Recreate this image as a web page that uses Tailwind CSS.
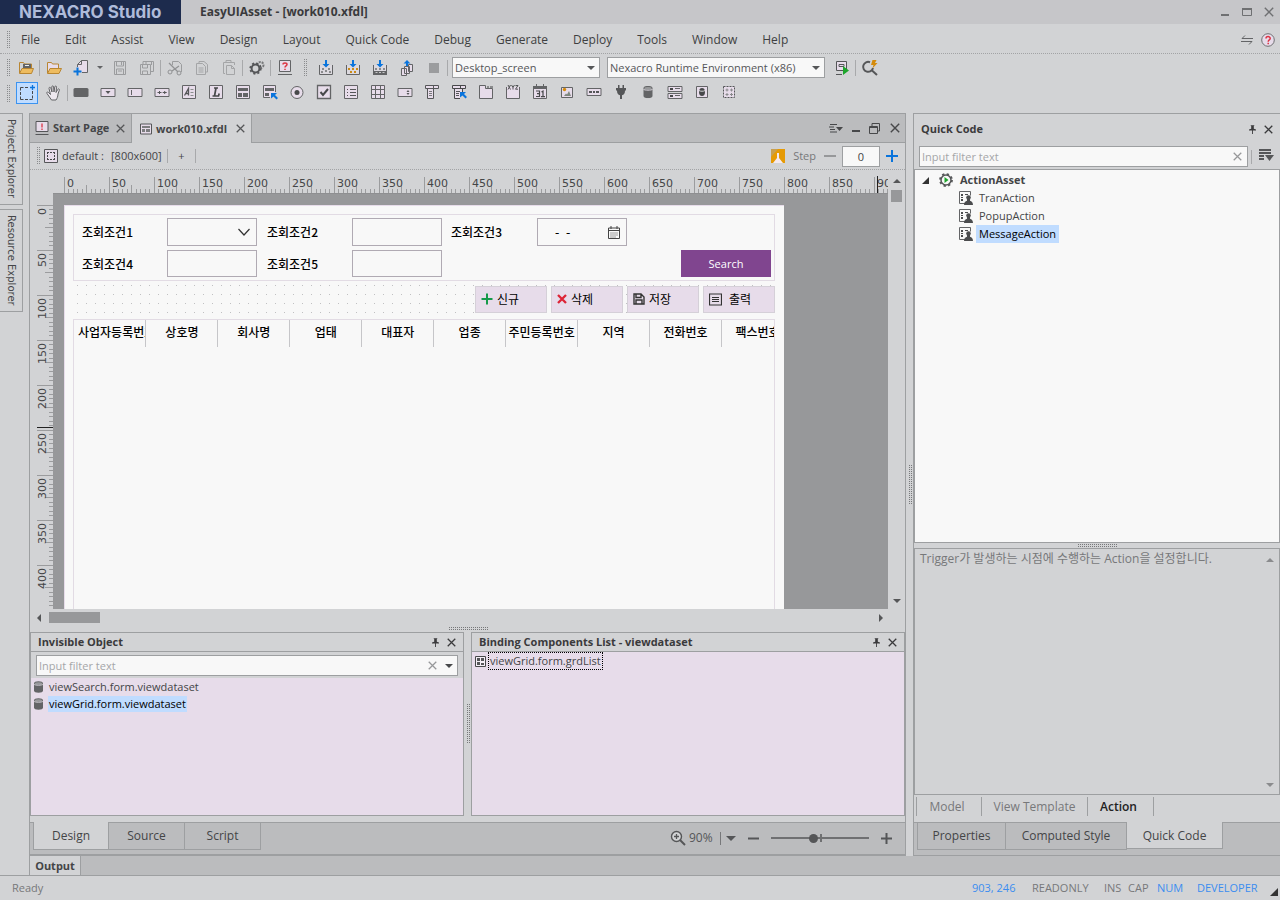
<!DOCTYPE html>
<html lang="ko">
<head>
<meta charset="utf-8">
<title>NEXACRO Studio</title>
<script src="https://cdn.jsdelivr.net/npm/@tailwindcss/browser@4"></script>
</head>
<body class="flex min-h-screen flex-col overflow-x-hidden bg-[#d2d3d5] font-['Open_Sans','Noto_Sans_CJK_KR',sans-serif] text-[11px] leading-4 text-[#444547]">

<svg class="absolute size-0" aria-hidden="true">
  <defs>
    <symbol id="x" viewBox="0 0 10 10"><path d="M.8.8l8.4 8.4M9.2.8L.8 9.2" fill="none" stroke="currentColor" stroke-width="1.4"/></symbol>
    <symbol id="pin" viewBox="0 0 8 10"><path d="M2 0h4v1H5.500v3L8 5v1H4.500v4h-1V6H0V5l2.500-1V1H2z" fill="currentColor"/></symbol>
    <symbol id="down" viewBox="0 0 8 4"><path d="M0 0h8L4 4z" fill="currentColor"/></symbol>
    <symbol id="up" viewBox="0 0 8 4"><path d="M0 4h8L4 0z" fill="currentColor"/></symbol>
    <symbol id="min" viewBox="0 0 10 10"><path d="M1 7h8v2H1z" fill="currentColor"/></symbol>
    <symbol id="db" viewBox="0 0 10 13"><path d="M0 2.500C0 1 2 0 5 0s5 1 5 2.500v8C10 12 8 13 5 13s-5-1-5-2.500z" fill="#636466"/><ellipse cx="5" cy="2.500" rx="4" ry="1.300" fill="#98999b"/><path d="M0 3.500c1 1.300 9 1.300 10 0" stroke="#e0dbe3" fill="none"/></symbol>
    <symbol id="act" viewBox="0 0 14 14"><path d="M6 12.500H.5V.5h11v4" fill="#f8f8f8" stroke="#636466"/><path d="M2 3h2v2H2zM2 6h2v1H2zM2 8h2v2H2zM6 3h3v1H6z" fill="#4b4c4e"/><circle cx="9.500" cy="6.500" r="2.300" fill="#4b4c4e"/><path d="M5 14c0-3 1.500-4 3-4.300V8h3v1.700c1.500.3 3 1.300 3 4.300z" fill="#4b4c4e"/></symbol>
    <pattern id="hticks" width="45" height="16" patternUnits="userSpaceOnUse">
      <path d="M.5 0v16M22.500 8v8M4.500 12v4M9.500 12v4M13.500 12v4M18.500 12v4M27.500 12v4M31.500 12v4M36.500 12v4M40.500 12v4" stroke="#9b9c9e"/>
    </pattern>
    <pattern id="vticks" width="16" height="45" patternUnits="userSpaceOnUse">
      <path d="M0 .5h16M8 22.500h8M12 4.500h4M12 9.500h4M12 13.500h4M12 18.500h4M12 27.500h4M12 31.500h4M12 36.500h4M12 40.500h4" stroke="#9b9c9e"/>
    </pattern>
  </defs>
</svg>

<!-- Title bar -->
<header class="flex h-6 shrink-0 items-center bg-[#c6c6c9]">
  <div class="flex h-full w-[181px] items-center bg-[#1d2b4d] pl-[19px] font-['Inter'] text-[17px] font-bold text-[#afbbda]">NEXACRO Studio</div>
  <h1 class="ml-[19px] text-[12px] font-bold text-[#3a3a3c]">EasyUIAsset - [work010.xfdl]</h1>
  <div class="ml-auto flex items-center gap-3 pr-[6px] text-[#6f7072]">
    <button aria-label="Minimize"><svg class="size-[10px]"><use href="#min"/></svg></button>
    <button aria-label="Maximize"><svg class="size-[10px]" viewBox="0 0 10 10"><path d="M.5 1.500h9v7h-9z" fill="none" stroke="currentColor"/><path d="M0 1h10v2H0z" fill="currentColor"/></svg></button>
    <button aria-label="Close"><svg class="size-[10px]"><use href="#x"/></svg></button>
  </div>
</header>

<!-- Menu bar -->
<nav class="flex h-[30px] shrink-0 items-center border-b border-dotted border-[#a2a3a5] pl-[6px] pt-[2px] text-[12px] text-[#3e3f41]">
  <span class="h-[18px] w-1 bg-[conic-gradient(#8a8b8d_25%,transparent_0)] bg-[length:2px_2px]"></span>
  <div class="ml-[11px] flex gap-[25px]">
    <button>File</button><button>Edit</button><button>Assist</button><button>View</button><button>Design</button><button>Layout</button><button>Quick Code</button><button>Debug</button><button>Generate</button><button>Deploy</button><button>Tools</button><button>Window</button><button>Help</button>
  </div>
  <div class="ml-auto flex items-center gap-2 pr-[5px]">
    <button aria-label="Switch"><svg class="h-[10px] w-[12px]" viewBox="0 0 12 10"><path d="M12 3.500H1L4 .5M0 6.500h11l-3 3" fill="none" stroke="#636466"/></svg></button>
    <button aria-label="Help topics"><svg class="size-[14px]" viewBox="0 0 14 14"><circle cx="7" cy="7" r="6.300" fill="#e7dcea" stroke="#6f7072"/><path d="M5 5.500C5 3 9.200 3 9.200 5.400 9.200 7 7.200 6.800 7.200 8.700M7.200 9.800v1.500" fill="none" stroke="#dd3444" stroke-width="1.500"/></svg></button>
  </div>
</nav>

<!-- Main toolbar -->
<div role="toolbar" aria-label="Standard" class="flex h-[27px] shrink-0 items-center pl-[6px] [&>button]:grid [&>button]:h-6 [&>button]:w-[27px] [&>button]:place-items-center [&_svg]:overflow-visible">
  <span class="mr-[2px] h-[18px] w-1 bg-[conic-gradient(#8a8b8d_25%,transparent_0)] bg-[length:2px_2px]"></span>
  <button aria-label="Open project"><svg class="size-4" viewBox="0 0 16 16"><path d="M1.500 13V2.500h4l1 1.500h7v4" fill="none" stroke="#b98632"/><path d="M5 4h8v4H5z" fill="#636466"/><path d="M7 5.500h4" stroke="#eee"/><path d="M4 8.500h11.500l-2 5h-12z" fill="#eebc60" stroke="#b98632"/></svg></button>
  <span class="h-4 w-px bg-[#a8a9ab]"></span>
  <button aria-label="Open"><svg class="size-4" viewBox="0 0 16 16"><path d="M1.500 13V2.500h4l1 1.500h6v4" fill="#e7dcea" stroke="#b98632"/><path d="M4 8.500h11.500l-2.500 5H1.500z" fill="#eebc60" stroke="#b98632"/></svg></button>
  <button aria-label="New"><svg class="size-4" viewBox="0 0 16 16"><path d="M4.500 7V4.500l4-4h6v12H9" fill="#e7dcea" stroke="#636466"/><path d="M8.500.5v4h-4" fill="none" stroke="#636466"/><path d="M4.500 7.500v8M.5 11.500h8" stroke="#0a74dc" stroke-width="2"/></svg></button>
  <span class="grid w-[12px] place-items-center text-[#636466]"><svg class="h-[3px] w-[6px]"><use href="#down"/></svg></span>
  <button aria-label="Save"><svg class="size-4" viewBox="0 0 16 16"><path d="M2.500 1.500h11v13h-11zM4.500 2v4h7V2M4.500 14V9h7v5M6 11h4M9.500 2v3" fill="none" stroke="#9b9c9e"/></svg></button>
  <button aria-label="Save all"><svg class="size-4" viewBox="0 0 16 16"><path d="M1.500 4.500h10v10h-10zM3.500 5v3h5V5M3.500 14v-3h5v3M4 4V1.500h10.500v10H12M7 2v2M12.500 2v3" fill="none" stroke="#9b9c9e"/></svg></button>
  <span class="h-4 w-px bg-[#a8a9ab]"></span>
  <button aria-label="Cut"><svg class="size-4" viewBox="0 0 16 16"><path d="M5.500 5V1.500h6l3 3V12" fill="none" stroke="#9b9c9e"/><path d="M2 3l9 9M12 6L5 11" stroke="#919294" stroke-width="1.300"/><circle cx="3" cy="12" r="2" fill="none" stroke="#919294"/><circle cx="12" cy="13" r="2" fill="none" stroke="#919294"/></svg></button>
  <button aria-label="Copy"><svg class="size-4" viewBox="0 0 16 16"><path d="M2.500 3.500h6l3 3v8h-9zM5 3V1.500h5l3.500 3V12H12M4.500 8h5M4.500 10h5M4.500 12h5" fill="none" stroke="#a4a5a7"/></svg></button>
  <button aria-label="Paste"><svg class="size-4" viewBox="0 0 16 16"><path d="M4 13.500H2.500v-11h11V5M5 2V.5h5V2M5.500 5.500h5l3 3v6h-8zM10.500 5.500v3h3" fill="none" stroke="#a4a5a7"/></svg></button>
  <span class="h-4 w-px bg-[#a8a9ab]"></span>
  <button aria-label="Options"><svg class="size-4" viewBox="0 0 16 16"><circle cx="11.500" cy="5" r="3" fill="none" stroke="#77787a" stroke-width="2" stroke-dasharray="2 1"/><circle cx="6.500" cy="8.500" r="5.400" fill="none" stroke="#555658" stroke-width="1.500" stroke-dasharray="2.120 2.120"/><circle cx="6.500" cy="8.500" r="3.900" fill="#d2d3d5" stroke="#555658" stroke-width="2"/></svg></button>
  <span class="h-4 w-px bg-[#a8a9ab]"></span>
  <button aria-label="Help"><svg class="size-4" viewBox="0 0 16 16"><path d="M2.500.5h11v11h-11z" fill="#e7dcea" stroke="#636466"/><path d="M1 14.500h14" stroke="#636466"/><path d="M6 4.500C6 2.500 10 2.500 10 4.500 10 6 8 5.800 8 7.500M8 8.700V10" fill="none" stroke="#dd3444" stroke-width="1.500"/></svg></button>
  <span class="mx-[5px] h-[18px] w-1 bg-[conic-gradient(#8a8b8d_25%,transparent_0)] bg-[length:2px_2px]"></span>
  <button aria-label="Generate"><svg class="size-4" viewBox="0 0 16 16"><path d="M1.500 5v9.500h13V5" fill="#dcd9df" stroke="#636466"/><path d="M4 8h2v2H4zM10 8h2v2h-2zM7 10h2v2H7zM3 11h2v2H3zM11 11h2v2h-2z" fill="#8a8b8d"/><path d="M7 0h2v4h2.500L8 7.500 4.500 4H7z" fill="#0a74dc"/></svg></button>
  <button aria-label="Generate all"><svg class="size-4" viewBox="0 0 16 16"><path d="M1.500 5v9.500h13V5" fill="#dcd9df" stroke="#636466"/><path d="M3 8h2v2H3zM11 8h2v2h-2zM7 8h2v2H7zM5 11h2v2H5zM9 11h2v2H9z" fill="#c98a17"/><path d="M7 0h2v4h2.500L8 7.500 4.500 4H7z" fill="#0a74dc"/></svg></button>
  <button aria-label="Build"><svg class="size-4" viewBox="0 0 16 16"><path d="M1.500 5v9.500h13V5" fill="#dcd9df" stroke="#636466"/><path d="M1 11h14v4H1z" fill="#636466"/><path d="M3.500 12.500h2M7 12.500h2M10.500 12.500h2" stroke="#c8c8ca"/><path d="M3 8h2v2H3zM11 8h2v2h-2zM7 8h2v2H7z" fill="#8a8b8d"/><path d="M7 0h2v4h2.500L8 7.500 4.500 4H7z" fill="#0a74dc"/></svg></button>
  <button aria-label="Deploy"><svg class="size-4" viewBox="0 0 16 16"><path d="M9.500 4.500h4v7h-4zM5.500 6.500h5v7h-5zM2.500 8.500h5v7h-5z" fill="#e7dcea" stroke="#636466"/><path d="M7 6V3.500H4.500L8 0l3.500 3.500H9V6z" fill="#0a74dc"/></svg></button>
  <button aria-label="Stop"><span class="size-[10px] bg-[#9b9c9e]"></span></button>
  <span class="mr-1 h-4 w-px bg-[#a8a9ab]"></span>
  <label class="relative"><span class="sr-only">Screen</span>
    <select class="block h-[21px] w-[148px] appearance-none border border-[#9d9fa1] bg-[#f8f8f8] pl-[2px] leading-4 text-[#555658]"><option>Desktop_screen</option></select>
    <svg class="pointer-events-none absolute right-[5px] top-[9px] h-1 w-2 text-[#555658]"><use href="#down"/></svg></label>
  <label class="relative ml-[7px]"><span class="sr-only">Runtime environment</span>
    <select class="block h-[21px] w-[218px] appearance-none border border-[#9d9fa1] bg-[#f8f8f8] pl-[2px] leading-4 text-[#555658]"><option>Nexacro Runtime Environment (x86)</option></select>
    <svg class="pointer-events-none absolute right-[5px] top-[9px] h-1 w-2 text-[#555658]"><use href="#down"/></svg></label>
  <span class="w-[3px]"></span>
  <button aria-label="Launch"><svg class="size-4" viewBox="0 0 16 16"><path d="M2.500 1.500h10v9h-10zM5 4.500h5v2H5zM2 14.500h6" fill="#e7dcea" stroke="#555658"/><path d="M9 6l6 4.500-6 4.500z" fill="#1ea62c"/></svg></button>
  <span class="h-4 w-px bg-[#a8a9ab]"></span>
  <button aria-label="Quick view"><svg class="size-4" viewBox="0 0 16 16"><path d="M8 2.200A5 5 0 1 0 11 8M9.500 10l5.500 5" fill="none" stroke="#555658" stroke-width="2"/><path d="M10.500 0h4l-1.500 3h2.500L10.500 8.500 11.500 5H9z" fill="#d58b0b"/></svg></button>
</div>

<!-- Component toolbar -->
<div role="toolbar" aria-label="Components" class="flex h-[32px] shrink-0 items-start pl-[6px] pt-px [&>button]:grid [&>button]:h-[22px] [&>button]:w-[27px] [&>button]:place-items-center [&_svg]:size-4 [&_svg]:overflow-visible">
  <span class="mr-[3px] mt-[3px] h-[18px] w-1 bg-[conic-gradient(#8a8b8d_25%,transparent_0)] bg-[length:2px_2px]"></span>
  <button aria-label="Select" aria-pressed="true"><span class="grid size-[22px] place-items-center border border-[#3b93f0] bg-[#c0dcff]"><svg viewBox="0 0 16 16"><path d="M1.500 2.500h9M1.500 2.500v12M1.500 14.500h12M13.500 6v9" fill="none" stroke="#47484a" stroke-dasharray="3 1.500"/><path d="M13.500 0v5M11 2.500h5" stroke="#0a74dc" stroke-width="1.300"/></svg></span></button>
  <button aria-label="Hand"><svg viewBox="0 0 16 16"><path d="M5.500 15L1 8.500C.3 7 1.700 6.500 2.500 7.500L4.500 9.500 3 3.500c-.2-1.500 1.500-1.500 1.800-.3L6 7 5.800 2c0-1.500 1.700-1.500 1.800 0l.4 5 .8-5c.2-1.500 1.900-1.200 1.700.2L10 7.500l1.700-3c.7-1.200 2.100-.5 1.600.8L12 9c-.2 3-.8 4-2 6z" fill="#eee8ef" stroke="#636466"/></svg></button>
  <span class="-mr-px mt-[3px] h-4 w-px bg-[#a8a9ab]"></span>
  <button aria-label="Button"><svg viewBox="0 0 16 16"><rect x=".5" y="3" width="15" height="9" rx="1.500" fill="#636466"/></svg></button>
  <button aria-label="Combo"><svg viewBox="0 0 16 16"><path d="M1 3.500h14v8H1z" fill="#e7dcea" stroke="#636466"/><path d="M5.500 6h5L8 9z" fill="#555658"/></svg></button>
  <button aria-label="Edit"><svg viewBox="0 0 16 16"><path d="M1 3.500h14v8H1z" fill="#e7dcea" stroke="#636466"/><path d="M4.500 5v5" stroke="#636466"/></svg></button>
  <button aria-label="MaskEdit"><svg viewBox="0 0 16 16"><path d="M1 3.500h14v8H1z" fill="#e7dcea" stroke="#636466"/><path d="M3.500 7.500h4M5.500 6v3M8.700 7.500h4M10.700 6v3" stroke="#555658"/></svg></button>
  <button aria-label="TextArea"><svg viewBox="0 0 16 16"><path d="M1.500.5h13v13h-13z" fill="#e7dcea" stroke="#636466"/><path d="M3.500 10.500l4-7v7M5 8.500h2" fill="none" stroke="#555658" stroke-width="1.300"/><path d="M9.500 4.500h3M9.500 7.500h3M9.500 10.500h3" stroke="#8a8f8c"/></svg></button>
  <button aria-label="Static"><svg viewBox="0 0 16 16"><path d="M1.500.5h13v13h-13z" fill="#e7dcea" stroke="#636466"/><path d="M6 3h4M8 3l-1.500 8M4.500 11h6l.7-2.500" fill="none" stroke="#47484a" stroke-width="1.700"/></svg></button>
  <button aria-label="Div"><svg viewBox="0 0 16 16"><path d="M1.500.5h13v13h-13z" fill="#e7dcea" stroke="#636466"/><path d="M3 3h10v3H3zM3 8h4v4H3zM8 8h5v4H8z" fill="#636466"/></svg></button>
  <button aria-label="PopupDiv"><svg viewBox="0 0 16 16"><path d="M13.500 7V.5h-12v12H8" fill="#e7dcea" stroke="#636466"/><path d="M3 3h9v3H3zM3 8h4v3H3z" fill="#636466"/><path d="M9 8h6l-2 2 3 3-1.500 1.500-3-3-2.500 2z" fill="#0a74dc"/></svg></button>
  <button aria-label="Radio"><svg viewBox="0 0 16 16"><circle cx="8" cy="7.500" r="6" fill="#e7dcea" stroke="#636466"/><circle cx="8" cy="7.500" r="2.500" fill="#47484a"/></svg></button>
  <button aria-label="CheckBox"><svg viewBox="0 0 16 16"><path d="M1.500.5h13v13h-13z" fill="#e7dcea" stroke="#636466" stroke-width="1.300"/><path d="M4.500 7l2.500 3 5-6" fill="none" stroke="#47484a" stroke-width="2"/></svg></button>
  <button aria-label="ListBox"><svg viewBox="0 0 16 16"><path d="M1.500.5h13v13h-13z" fill="#e7dcea" stroke="#636466"/><path d="M4 4.500h1M7 4.500h6M4 7.500h1M7 7.500h6M4 10.500h1M7 10.500h6" stroke="#555658"/></svg></button>
  <button aria-label="Grid"><svg viewBox="0 0 16 16"><path d="M1.500.5h13v13h-13zM1 4.500h14M1 9.500h14M5.500 0v14M10.500 0v14" fill="#e7dcea" stroke="#636466"/></svg></button>
  <button aria-label="Spin"><svg viewBox="0 0 16 16"><path d="M1 3.500h14v8H1z" fill="#e7dcea" stroke="#636466"/><path d="M9.500 7L11 5l1.500 2zM9.500 8l1.500 2 1.500-2z" fill="#555658"/></svg></button>
  <button aria-label="Menu"><svg viewBox="0 0 16 16"><path d="M3.500 3.500h6v10h-6zM1.500.5h13v3h-13zM9.500.5v3" fill="#e7dcea" stroke="#555658"/><path d="M5 6.500h3M5 8.500h3M5 10.500h3" stroke="#77787a"/></svg></button>
  <button aria-label="PopupMenu"><svg viewBox="0 0 16 16"><path d="M9 13.500H3.500v-10h8V7M1.500.5h13v3h-13zM9.500.5v3" fill="#e7dcea" stroke="#47484a"/><path d="M5 6.500h4M5 8.500h3M5 10.500h3" stroke="#555658"/><path d="M9 7h6l-2 2 3 3-1.500 1.500-3-3-2.500 2z" fill="#0a74dc"/></svg></button>
  <button aria-label="Tab"><svg viewBox="0 0 16 16"><path d="M1.500 13.500V.5h6v3h7v10z" fill="#e7dcea" stroke="#636466"/><path d="M9 1h2v2H9zM12 1h3v2h-3z" fill="#8a8b8d"/></svg></button>
  <button aria-label="GroupBox"><svg viewBox="0 0 16 16"><path d="M1.500 2v11.500h13V2" fill="#e7dcea" stroke="#636466"/><path d="M3 0l2.500 4.500M5.500 0L3 4.500M6.500 0L8 2.200 9.500 0M8 2v2.500M10.500.5H13l-2.500 3.700H13" fill="none" stroke="#555658"/></svg></button>
  <button aria-label="Calendar"><svg viewBox="0 0 16 16"><path d="M1.500 1.500h13v12h-13z" fill="#e7dcea" stroke="#636466"/><path d="M1 1h14v3H1z" fill="#636466"/><path d="M4.500-1v3M11.500-1v3" stroke="#636466"/><path d="M4 6h3.500v5.500H4M5 8.700h2.500M9.500 7L11 6v5.700M9 11.700h4" fill="none" stroke="#47484a" stroke-width="1.200"/></svg></button>
  <button aria-label="ImageViewer"><svg viewBox="0 0 16 16"><path d="M2.500 2.500h11v10h-11z" fill="#e7dcea" stroke="#636466"/><circle cx="5.500" cy="4.500" r="1.700" fill="#d58b0b"/><path d="M5 11l2-2.500 1 1L10 6l2 5z" fill="#7f887f"/></svg></button>
  <button aria-label="Progress"><svg viewBox="0 0 16 16"><path d="M1 3.500h14v7H1z" fill="#e7dcea" stroke="#636466"/><path d="M3 6h3v2H3zM7 6h2v2H7zM10 6h3v2h-3z" fill="#555658"/></svg></button>
  <button aria-label="Plugin"><svg viewBox="0 0 16 16"><path d="M5 0h1.500v3h3V0H11v3h2v2.500h-1c0 3-1 4-3 4.800V14H7v-3.700c-2-.8-3-1.800-3-4.800H3V3h2z" fill="#555658"/></svg></button>
  <button aria-label="Dataset"><svg viewBox="-3 -1 16 17"><use href="#db" width="10" height="13"/></svg></button>
  <button aria-label="FileUpload"><svg viewBox="0 0 16 16"><path d="M1 1.500h14v5H1zM1 8.500h14v5H1z" fill="#e7dcea" stroke="#636466"/><path d="M3 3h3v2H3zM3 10h3v2H3z" fill="#47484a"/><path d="M8 3.500h5M8 10.500h5" stroke="#636466"/></svg></button>
  <button aria-label="DataObject"><svg viewBox="0 0 16 16"><path d="M2.500 1.500h11v11h-11z" fill="#e7dcea" stroke="#636466"/><ellipse cx="8" cy="7" rx="3" ry="4" fill="#47484a"/><path d="M5 5.500c1 1 5 1 6 0" fill="none" stroke="#d2d3d5"/></svg></button>
  <button aria-label="Layout"><svg viewBox="0 0 16 16"><path d="M2.500 1.500h11v11h-11z" fill="#e7dcea" stroke="#555658" stroke-dasharray="2 1"/><path d="M4.500 5h3M6 3.500v3M9 5h3M10.500 3.500v3M4.500 9.500h3M6 8v3M9 9.500h3M10.500 8v3" stroke="#8a8b8d"/></svg></button>
</div>

<main class="flex flex-1">
  <!-- Docked side tabs -->
  <aside class="flex w-[29px] shrink-0 flex-col items-start gap-1 font-['DejaVu_Sans']">
    <button class="flex h-[92px] w-[23px] items-center justify-center border border-l-0 border-[#9d9fa1] text-[10px] [writing-mode:vertical-rl]">Project Explorer</button>
    <button class="flex h-[103px] w-[23px] items-center justify-center border border-l-0 border-[#9d9fa1] text-[10px] [writing-mode:vertical-rl]">Resource Explorer</button>
  </aside>

  <!-- Editor -->
  <section class="flex min-w-0 flex-1 flex-col border border-[#9d9fa1]">
    <div class="flex h-[29px] shrink-0 bg-[#bbbcbe] font-bold">
      <div class="flex w-[102px] items-center border-b border-r border-[#9d9fa1] pl-[5px]">
        <svg class="size-[14px]" viewBox="0 0 14 14"><path d="M1 .5h12v10H1z" fill="#e7dcea" stroke="#555658"/><path d="M.5 13.500h13" stroke="#555658"/><path d="M7 2.500v4M7 7.500V9" stroke="#dd3444" stroke-width="1.300"/></svg>
        <button class="ml-1 w-[59px] whitespace-nowrap text-left">Start Page</button>
        <button class="ml-1 text-[#555658]" aria-label="Close Start Page"><svg class="size-[9px]"><use href="#x"/></svg></button>
      </div>
      <div class="flex w-[120px] items-center border-r border-[#9d9fa1] bg-[#d2d3d5] pl-[8px]">
        <svg class="size-3" viewBox="0 0 12 12"><path d="M.5 1h11v10H.5z" fill="#e7dcea" stroke="#555658"/><path d="M2 3h8v2H2zM2 6h3v3H2zM6 6h4v3H6z" fill="#7c7d7f"/></svg>
        <button class="ml-1 w-[76px] whitespace-nowrap text-left">work010.xfdl</button>
        <button class="ml-1 text-[#555658]" aria-label="Close work010.xfdl"><svg class="size-[9px]"><use href="#x"/></svg></button>
      </div>
      <div class="flex flex-1 items-center justify-end gap-2 border-b border-[#9d9fa1] pr-[5px] text-[#47484a]">
        <button aria-label="Document list"><svg class="h-[9px] w-[14px]" viewBox="0 0 14 9"><path d="M1 .5h7M0 3h5M1 5.500h5M1 8h7" stroke="currentColor"/><path d="M7 3h7l-3.500 4z" fill="currentColor"/></svg></button>
        <button aria-label="Minimize document"><svg class="size-[10px]"><use href="#min"/></svg></button>
        <button aria-label="Restore document"><svg class="size-[11px]" viewBox="0 0 11 11"><path d="M.5 3.500h8v7h-8zM3 3V.5h7.500V8H9M1 4.500h7" fill="none" stroke="currentColor"/></svg></button>
        <button aria-label="Close document"><svg class="ml-[2px] size-[10px]"><use href="#x"/></svg></button>
      </div>
    </div>

    <div class="flex h-[27px] shrink-0 items-center border-b border-dotted border-[#a2a3a5] pl-[6px]">
      <span class="h-[18px] w-1 bg-[conic-gradient(#8a8b8d_25%,transparent_0)] bg-[length:2px_2px]"></span>
      <svg class="ml-1 size-[14px]" viewBox="0 0 14 14"><path d="M.5.5h13v13H.5z" fill="#e7dcea" stroke="#555658"/><path d="M3 3.500h8M3 10.500h8M3.500 3v8M10.500 3v8" stroke="#47484a" stroke-dasharray="2 1"/></svg>
      <span class="ml-1 w-[49px] whitespace-nowrap">default :</span>
      <span class="w-[56px] whitespace-nowrap">[800x600]</span>
      <span class="h-[14px] w-px bg-[#a8a9ab]"></span>
      <button class="w-[27px]">+</button>
      <span class="h-[14px] w-px bg-[#a8a9ab]"></span>
      <svg class="ml-auto size-[14px]" viewBox="0 0 14 14"><path d="M0 0h14v14H0z" fill="#e59a05"/><path d="M0 0h7L0 8z" fill="#c8a050"/><path d="M6 4h2v5l4 5H2l4-5z" fill="#f4e9ef"/></svg>
      <label for="step" class="ml-2 text-[#77787a]">Step</label>
      <button class="ml-2 text-[#97989a]" aria-label="Decrease step"><svg class="size-3" viewBox="0 0 12 12"><path d="M0 5h12v2H0z" fill="currentColor"/></svg></button>
      <input id="step" value="0" class="ml-[6px] h-[21px] w-[38px] border border-[#9d9fa1] bg-[#f8f8f8] text-center">
      <button class="ml-[6px] mr-[7px]" aria-label="Increase step"><svg class="size-3" viewBox="0 0 12 12"><path d="M6 0v12M0 6h12" stroke="#0a74dc" stroke-width="2"/></svg></button>
    </div>

    <div class="grid min-h-0 flex-1 grid-cols-[23px_minmax(0,1fr)_17px] grid-rows-[24px_minmax(404px,1fr)_17px] font-['DejaVu_Sans']">
      <div></div>
      <!-- Horizontal ruler -->
      <div class="relative overflow-hidden border-b border-[#8e8f91] pl-[11px]">
        <div class="relative h-full">
          <svg class="absolute inset-x-0 bottom-0 h-4 w-full"><rect width="100%" height="16" fill="url(#hticks)"/></svg>
          <div class="relative flex pl-[3px] pt-[6px] [&>span]:w-[45px] [&>span]:shrink-0"><span>0</span><span>50</span><span>100</span><span>150</span><span>200</span><span>250</span><span>300</span><span>350</span><span>400</span><span>450</span><span>500</span><span>550</span><span>600</span><span>650</span><span>700</span><span>750</span><span>800</span><span>850</span><span>900</span></div>
          <span class="absolute bottom-0 left-[813px] h-[17px] w-px bg-[#222]"></span>
        </div>
      </div>
      <div class="row-span-2 flex flex-col items-center text-[#555658]">
        <button class="mt-[9px] grid h-1 place-items-center" aria-label="Scroll up"><svg class="h-1 w-2"><use href="#up"/></svg></button>
        <span class="mt-[7px] h-3 w-[11px] bg-[#97989a]"></span>
        <button class="mb-[6px] mt-auto grid h-1 place-items-center" aria-label="Scroll down"><svg class="h-1 w-2"><use href="#down"/></svg></button>
      </div>
      <!-- Vertical ruler -->
      <div class="relative overflow-hidden pt-[11px]">
        <div class="relative h-full">
          <svg class="absolute inset-y-0 right-0 h-full w-4"><rect width="16" height="100%" fill="url(#vticks)"/></svg>
          <div class="relative flex flex-col pl-[5px] [&>span:last-child]:h-[30px] [&>span]:h-[45px] [&>span]:shrink-0 [&>span]:rotate-180 [&>span]:pb-[3px] [&>span]:text-right [&>span]:[writing-mode:vertical-rl]"><span>0</span><span>50</span><span>100</span><span>150</span><span>200</span><span>250</span><span>300</span><span>350</span><span>400</span></div>
          <span class="absolute right-0 top-[222px] h-px w-4 bg-[#222]"></span>
        </div>
      </div>
      <!-- Canvas -->
      <div class="overflow-hidden bg-[#97989a] pl-[11px] pt-[11px] font-['Noto_Sans_CJK_KR']">
        <div class="h-full w-[720px] border-l border-t border-[#e7dcea] bg-[#f8f8f8] pl-2 pr-[9px] pt-2 text-[12px] text-black">
          <div class="flex h-full flex-col">
            <form class="grid h-[67px] shrink-0 grid-cols-[85px_90px_95px_90px_95px_90px_1fr] grid-rows-[28px_27px] items-center gap-y-1 border border-[#e2dbe4] pl-2 pr-[3px] pt-[3px] font-medium [&>input]:h-full [&>input]:border [&>input]:border-[#b0aab3]">
              <label for="c1">조회조건1</label>
              <span class="relative h-full"><select id="c1" class="size-full appearance-none border border-[#b0aab3]"><option></option></select><svg class="pointer-events-none absolute right-[7px] top-[10px] h-[8px] w-[12px]" viewBox="0 0 12 8"><path d="M.5 1L6 7l5.500-6" fill="none" stroke="#333" stroke-width="1.200"/></svg></span>
              <label for="c2" class="ml-[10px]">조회조건2</label><input id="c2">
              <label for="c3" class="ml-[9px]">조회조건3</label>
              <span class="relative h-full"><input id="c3" value="-  -" class="size-full border border-[#b0aab3] pl-[17px]"><svg class="absolute right-[7px] top-[8px] h-[13px] w-[12px]" viewBox="0 0 12 13"><path d="M.5 2h11v10.500H.5zM.5 4.500h11M3 0v3M9 0v3" fill="none" stroke="#444"/><path d="M2.500 7h7M2.500 9h7M2.500 11h5" stroke="#444" stroke-dasharray="1 1"/></svg></span>
              <span></span>
              <label for="c4">조회조건4</label><input id="c4">
              <label for="c5" class="ml-[10px]">조회조건5</label><input id="c5">
              <button type="button" class="col-span-3 h-full w-[90px] justify-self-end bg-[#80458f] font-['Open_Sans'] text-[11px] text-white">Search</button>
            </form>
            <div class="flex h-[38px] shrink-0 items-start justify-end gap-[4px] bg-[radial-gradient(#c0c0c2_0.5px,transparent_0.8px)] bg-[length:9px_9px] pt-[5px] [&>button]:flex [&>button]:h-[27px] [&>button]:w-[72px] [&>button]:items-center [&>button]:gap-1 [&>button]:border [&>button]:border-[#d5d0d8] [&>button]:bg-[#e7dcea] [&>button]:pb-[2px] [&>button]:pl-[5px] [&>button>svg]:mt-px">
              <button><svg class="size-3" viewBox="0 0 12 12"><path d="M6 .5v11M.5 6h11" stroke="#169a4a" stroke-width="2"/></svg>신규</button>
              <button><svg class="size-[10px]" viewBox="0 0 10 10"><path d="M1 1l8 8M9 1L1 9" stroke="#dd2436" stroke-width="2.300"/></svg>삭제</button>
              <button><svg class="size-3" viewBox="0 0 12 12"><path d="M1 1h7l3 3v7H1zM3 1v3.500h5V1M3 11V7h6v4" fill="none" stroke="#333" stroke-width="1.400"/></svg>저장</button>
              <button><svg class="mr-[3px] size-[13px]" viewBox="0 0 13 13"><path d="M.5 1h12v11H.5zM3 4.500h7M3 6.500h7M3 8.500h7" fill="none" stroke="#333" stroke-width="1.200"/></svg>출력</button>
            </div>
            <div class="min-h-0 flex-1 overflow-hidden border border-b-0 border-[#e2dbe4]">
              <table class="w-[720px] table-fixed border-collapse">
                <thead><tr class="h-[27px] [&>th]:overflow-hidden [&>th]:whitespace-nowrap [&>th]:border-r [&>th]:border-[#c6c6c9] [&>th]:p-0 [&>th]:pb-[3px] [&>th]:font-medium"><th><span class="block pl-1 text-left">사업자등록번호</span></th><th>상호명</th><th>회사명</th><th>업태</th><th>대표자</th><th>업종</th><th>주민등록번호</th><th>지역</th><th>전화번호</th><th>팩스번호</th></tr></thead>
              </table>
            </div>
          </div>
        </div>
      </div>
      <!-- Horizontal scrollbar -->
      <div class="col-span-3 flex items-center pl-[7px] pr-[22px] text-[#555658]">
        <button aria-label="Scroll left"><svg class="h-2 w-1" viewBox="0 0 4 8"><path d="M4 0v8L0 4z" fill="currentColor"/></svg></button>
        <span class="ml-[8px] h-[11px] w-[51px] bg-[#97989a]"></span>
        <button class="ml-auto" aria-label="Scroll right"><svg class="h-2 w-1" viewBox="0 0 4 8"><path d="M0 0v8l4-4z" fill="currentColor"/></svg></button>
      </div>
    </div>

    <div class="flex h-[6px] shrink-0 items-center justify-center"><span class="h-1 w-10 bg-[conic-gradient(#77787a_25%,transparent_0)] bg-[length:2px_2px]"></span></div>

    <!-- Lower panels -->
    <div class="flex h-[184px] shrink-0 [&>section]:min-w-0 [&>section]:flex-1">
      <section class="flex flex-col border border-[#9d9fa1]">
        <div class="flex h-[19px] shrink-0 items-center border-b border-[#9d9fa1] pl-[7px] pr-[7px] text-[#3a3a3c]">
          <h2 class="font-bold">Invisible Object</h2>
          <button class="ml-auto" aria-label="Pin"><svg class="h-[9px] w-[7px]"><use href="#pin"/></svg></button>
          <button class="ml-2" aria-label="Close"><svg class="size-[9px]"><use href="#x"/></svg></button>
        </div>
        <div class="relative h-[26px] shrink-0 px-[5px] pt-[3px]">
          <input aria-label="Filter objects" placeholder="Input filter text" class="block h-[21px] w-full border border-[#9d9fa1] bg-[#f8f8f8] pl-[2px] placeholder:text-[#a5a6a8]">
          <svg class="absolute right-[26px] top-[9px] size-[9px] text-[#97989a]"><use href="#x"/></svg>
          <svg class="absolute right-[10px] top-[12px] h-1 w-2 text-[#47484a]"><use href="#down"/></svg>
        </div>
        <ul class="flex-1 bg-[#e7dcea] pl-[3px]">
          <li class="flex h-[17px] items-center gap-[5px]"><svg class="h-3 w-[9px]"><use href="#db"/></svg><span class="px-px">viewSearch.form.viewdataset</span></li>
          <li class="flex h-[17px] items-center gap-[5px]"><svg class="h-3 w-[9px]"><use href="#db"/></svg><span class="bg-[#c0dcff] px-px text-black">viewGrid.form.viewdataset</span></li>
        </ul>
      </section>
      <div class="flex w-[7px] shrink-0 items-center justify-center"><span class="h-10 w-1 bg-[conic-gradient(#77787a_25%,transparent_0)] bg-[length:2px_2px]"></span></div>
      <section class="flex flex-col border border-[#9d9fa1]">
        <div class="flex h-[19px] shrink-0 items-center border-b border-[#9d9fa1] pl-[7px] pr-[7px] text-[#3a3a3c]">
          <h2 class="font-bold">Binding Components List - viewdataset</h2>
          <button class="ml-auto" aria-label="Pin"><svg class="h-[9px] w-[7px]"><use href="#pin"/></svg></button>
          <button class="ml-2" aria-label="Close"><svg class="size-[9px]"><use href="#x"/></svg></button>
        </div>
        <ul class="flex-1 bg-[#e7dcea] pl-[3px]">
          <li class="flex items-center gap-[2px]"><svg class="size-[11px]" viewBox="0 0 11 11"><path d="M.5.500h10v10H.5z" fill="#f4eef6" stroke="#47484a"/><path d="M2 2h3v3H2zM6 2h3v3H6zM2 6h3v3H2zM6 7h3v2H6z" fill="#555658"/></svg><span class="border border-dotted border-black px-px">viewGrid.form.grdList</span></li>
        </ul>
      </section>
    </div>

    <!-- View tabs and zoom -->
    <div class="mt-[6px] flex h-[33px] shrink-0 items-start border-y border-[#9d9fa1] bg-[#bbbcbe] pl-[3px]">
      <div class="flex h-[27px] text-[12px] [&>button]:w-[76px] [&>button]:border-b [&>button]:border-r [&>button]:border-[#9d9fa1]">
        <button class="-mt-px h-[28px] border-l bg-[#d2d3d5]">Design</button><button>Source</button><button>Script</button>
      </div>
      <div class="ml-auto mt-[7px] flex h-4 items-center text-[#555658]">
        <svg class="size-4" viewBox="0 0 16 16"><circle cx="6.500" cy="6.500" r="5" fill="#d2d3d5" stroke="currentColor" stroke-width="1.400"/><path d="M10 10l5 5" stroke="currentColor" stroke-width="2"/><path d="M4 6.500h5M6.500 4v5" stroke="currentColor" stroke-width="1.300"/></svg>
        <span class="ml-[3px] w-[31px] text-[12px]">90%</span>
        <span class="h-[13px] w-px bg-[#77787a]"></span>
        <button class="ml-[5px]" aria-label="Zoom levels"><svg class="h-[5px] w-[10px]" viewBox="0 0 8 4"><path d="M0 0h8L4 4z" fill="currentColor"/></svg></button>
        <button class="ml-3" aria-label="Zoom out"><svg class="size-[11px]" viewBox="0 0 11 11"><path d="M0 4.500h11v2H0z" fill="currentColor"/></svg></button>
        <span class="relative ml-3 flex w-[98px] items-center">
          <input type="range" aria-label="Zoom" min="0" max="100" value="43" class="h-[2px] w-full appearance-none bg-[#6f7072] [&::-webkit-slider-thumb]:size-[9px] [&::-webkit-slider-thumb]:appearance-none [&::-webkit-slider-thumb]:rounded-full [&::-webkit-slider-thumb]:bg-[#555658]">
          <span class="absolute left-1/2 h-2 w-[2px] bg-[#6f7072]"></span>
        </span>
        <button class="ml-3 mr-[13px]" aria-label="Zoom in"><svg class="size-[11px]" viewBox="0 0 11 11"><path d="M0 5.500h11M5.500 0v11" stroke="currentColor" stroke-width="2"/></svg></button>
      </div>
    </div>
  </section>

  <div class="flex w-[7px] shrink-0 items-center justify-center"><span class="h-10 w-1 bg-[conic-gradient(#77787a_25%,transparent_0)] bg-[length:2px_2px]"></span></div>

  <!-- Quick Code panel -->
  <section class="flex w-[367px] shrink-0 flex-col border border-r-0 border-[#9d9fa1]">
    <div class="flex h-[30px] shrink-0 items-center pl-[7px] pr-[7px] text-[#3a3a3c]">
      <h2 class="font-bold">Quick Code</h2>
      <button class="ml-auto" aria-label="Pin"><svg class="h-[9px] w-[7px]"><use href="#pin"/></svg></button>
      <button class="ml-2" aria-label="Close"><svg class="size-[9px]"><use href="#x"/></svg></button>
    </div>
    <div class="flex h-[25px] shrink-0 items-start pl-[5px] pt-[2px]">
      <span class="relative flex-1"><input aria-label="Filter actions" placeholder="Input filter text" class="block h-[21px] w-full border border-[#9d9fa1] bg-[#f8f8f8] pl-[2px] placeholder:text-[#a5a6a8]"><svg class="absolute right-[6px] top-[6px] size-[9px] text-[#97989a]"><use href="#x"/></svg></span>
      <span class="ml-[3px] mt-1 h-[14px] w-px bg-[#a8a9ab]"></span>
      <button class="ml-[7px] mr-[6px] mt-[3px]" aria-label="Filter options"><svg class="h-[13px] w-[15px]" viewBox="0 0 15 13"><path d="M0 1h12M0 4h12M0 7h5M0 10h5" stroke="#555658" stroke-width="2"/><path d="M6 6h9l-4.500 6z" fill="#555658"/></svg></button>
    </div>
    <ul class="min-h-0 flex-1 border border-[#9d9fa1] bg-[#f8f8f8] pt-px [&>li]:flex [&>li]:h-[18px] [&>li]:items-center">
      <li class="pl-[7px]"><svg class="size-[7px]" viewBox="0 0 6 6"><path d="M6 0v6H0z" fill="#333"/></svg><svg class="ml-[10px] size-[14px]" viewBox="0 0 14 14"><circle cx="7" cy="7" r="5" fill="#f8f8f8" stroke="#555658" stroke-width="1.500"/><circle cx="7" cy="7" r="6" fill="none" stroke="#555658" stroke-width="1.800" stroke-dasharray="2.300 2.412"/><path d="M5.500 4l4 3-4 3z" fill="#1ea62c"/></svg><span class="ml-[7px] font-bold">ActionAsset</span></li>
      <li class="pl-[44px]"><svg class="size-[14px]"><use href="#act"/></svg><span class="ml-[3px] px-[3px]">TranAction</span></li>
      <li class="pl-[44px]"><svg class="size-[14px]"><use href="#act"/></svg><span class="ml-[3px] px-[3px]">PopupAction</span></li>
      <li class="pl-[44px]"><svg class="size-[14px]"><use href="#act"/></svg><span class="ml-[3px] bg-[#c0dcff] px-[3px] py-px text-black">MessageAction</span></li>
    </ul>
    <div class="flex h-[5px] shrink-0 items-center justify-center"><span class="h-1 w-10 bg-[conic-gradient(#77787a_25%,transparent_0)] bg-[length:2px_2px]"></span></div>
    <div class="flex h-[247px] shrink-0 border border-[#9d9fa1] pl-[5px] pt-[2px] text-[12px] text-[#77787a]">
      <p>Trigger가 발생하는 시점에 수행하는 Action을 설정합니다.</p>
      <div class="ml-auto flex flex-col justify-between py-[7px] pr-[5px] text-[#8a8b8d]"><svg class="h-1 w-2"><use href="#up"/></svg><svg class="h-1 w-2"><use href="#down"/></svg></div>
    </div>
    <div class="flex h-[27px] shrink-0 items-start pl-[2px] pt-[2px] text-[12px] text-[#77787a] [&>button]:h-[19px] [&>button]:border-r [&>button]:border-[#9d9fa1]">
      <button class="w-[66px] border-l pr-1">Model</button><button class="w-[106px]">View Template</button><button class="w-[66px] pr-1 font-semibold text-[#222]">Action</button>
    </div>
    <div class="flex h-[33px] shrink-0 items-start border-t border-[#9d9fa1] bg-[#bbbcbe] pl-[3px] text-[12px] [&>button]:h-[27px] [&>button]:border-b [&>button]:border-r [&>button]:border-[#9d9fa1]">
      <button class="w-[89px] border-l">Properties</button><button class="w-[121px]">Computed Style</button><button class="-mt-px w-[96px] bg-[#d2d3d5] pt-px">Quick Code</button>
    </div>
  </section>
</main>

<div class="flex h-[19px] shrink-0 bg-[#bbbcbe]">
  <div class="w-[29px] shrink-0 bg-[#d2d3d5]"></div>
  <button class="w-[52px] border-x border-[#9d9fa1] bg-[#d2d3d5] font-bold">Output</button>
</div>
<footer class="flex h-[25px] shrink-0 items-center border-t border-[#9d9fa1] pl-3 pr-[2px] text-[#77787a]">
  <span>Ready</span>
  <span class="ml-auto w-[60px] text-[#3b8df0]">903, 246</span><span class="w-[72px]">READONLY</span><span class="w-6">INS</span><span class="w-[29px]">CAP</span><span class="w-10 text-[#3b8df0]">NUM</span><span class="w-[73px] text-[#3b8df0]">DEVELOPER</span>
  <svg class="mb-1 size-2 self-end" viewBox="0 0 8 8"><path d="M8 0v8H0z" fill="#333"/></svg>
</footer>
</body>
</html>
